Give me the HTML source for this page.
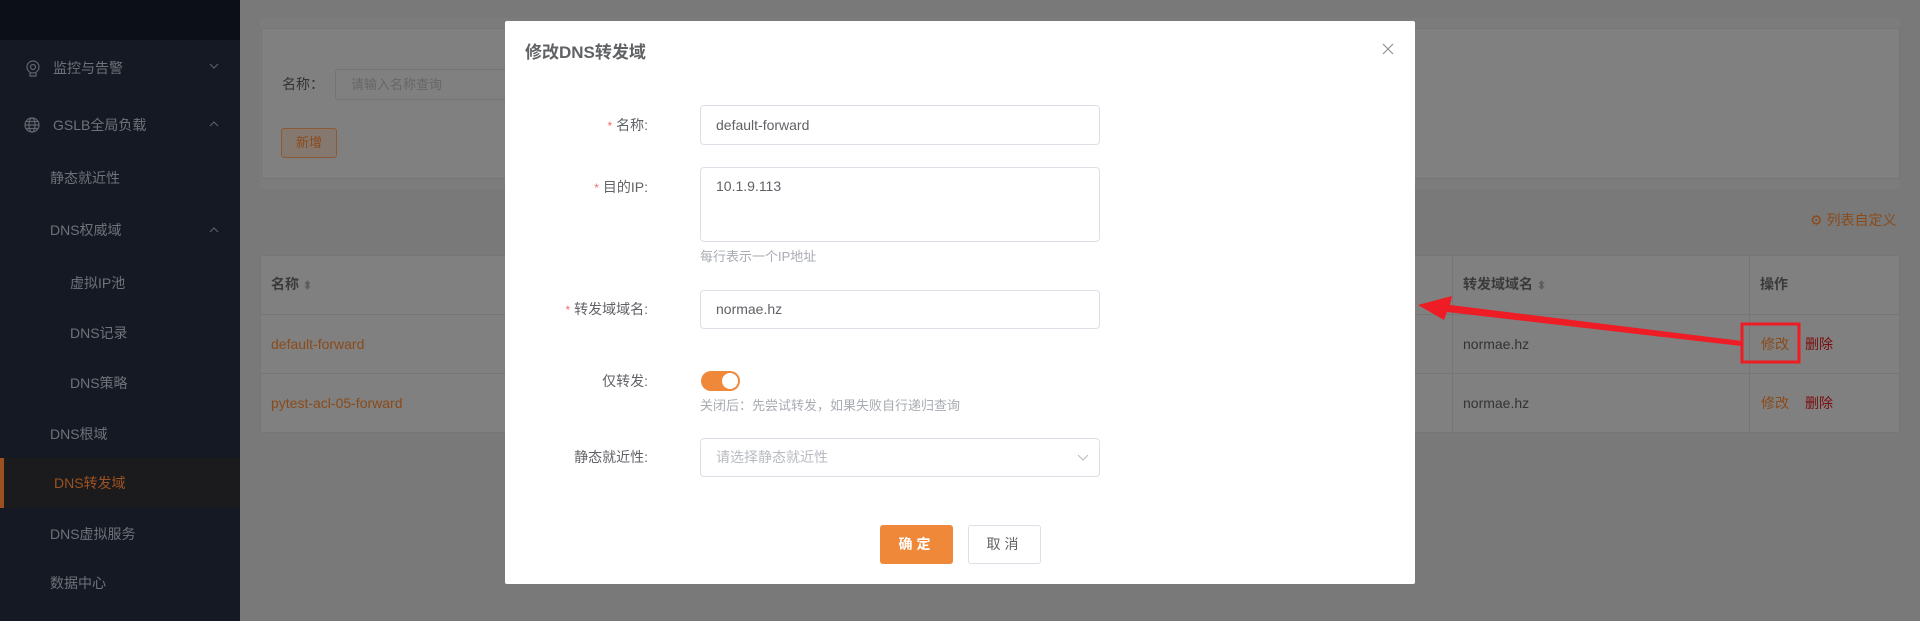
<!DOCTYPE html>
<html><head><meta charset="utf-8"><style>
*{box-sizing:border-box;margin:0;padding:0}
body{width:1920px;height:621px;overflow:hidden;background:#797979;font-family:"Liberation Sans","Noto Sans CJK SC",sans-serif;font-size:14px;position:relative}
.a{position:absolute;line-height:20px;white-space:nowrap}
.si{position:absolute;color:#6f7279;line-height:20px;white-space:nowrap}
.bx{position:absolute}
.lbl{position:absolute;right:767px;color:#606266;line-height:20px;white-space:nowrap}
.lbl i{color:#f56c6c;font-style:normal;margin-right:4px;font-size:12px}
.inp{position:absolute;left:195px;width:400px;border:1px solid #dcdfe6;border-radius:4px;padding:0 15px;color:#606266}
.hint{position:absolute;left:195px;color:#a8abb2;font-size:13px;line-height:20px;white-space:nowrap}
</style></head><body>
<div class="bx" style="left:0;top:0;width:240px;height:621px;background:#141923"></div>
<div class="bx" style="left:0;top:0;width:240px;height:40px;background:#0c0f17"></div>
<svg class="bx" style="left:25px;top:60px" width="16" height="18" viewBox="0 0 16 18" fill="none" stroke="#62656b" stroke-width="1.2"><circle cx="8" cy="7" r="6"/><circle cx="8" cy="7" r="2.5"/><path d="M5 13v3h6v-3"/></svg>
<div class="si" style="left:53px;top:58px">监控与告警</div>
<svg class="bx" style="left:209px;top:63px" width="10" height="6" viewBox="0 0 10 6" fill="none" stroke="#62656b"><path d="M1 1l4 4 4-4"/></svg>
<svg class="bx" style="left:24px;top:117px" width="16" height="16" viewBox="0 0 16 16" fill="none" stroke="#62656b" stroke-width="1.2"><circle cx="8" cy="8" r="7"/><ellipse cx="8" cy="8" rx="3" ry="7"/><path d="M1 8h14M2 4.5h12M2 11.5h12"/></svg>
<div class="si" style="left:53px;top:115px">GSLB全局负载</div>
<svg class="bx" style="left:209px;top:121px" width="10" height="6" viewBox="0 0 10 6" fill="none" stroke="#62656b"><path d="M1 5l4-4 4 4"/></svg>
<div class="si" style="left:50px;top:168px">静态就近性</div>
<div class="si" style="left:50px;top:220px">DNS权威域</div>
<svg class="bx" style="left:209px;top:227px" width="10" height="6" viewBox="0 0 10 6" fill="none" stroke="#62656b"><path d="M1 5l4-4 4 4"/></svg>
<div class="si" style="left:70px;top:273px">虚拟IP池</div>
<div class="si" style="left:70px;top:323px">DNS记录</div>
<div class="si" style="left:70px;top:373px">DNS策略</div>
<div class="si" style="left:50px;top:424px">DNS根域</div>
<div class="bx" style="left:0;top:458px;width:240px;height:50px;background:#1b1b1e"></div>
<div class="bx" style="left:0;top:458px;width:4px;height:50px;background:#9a5020"></div>
<div class="si" style="left:54px;top:473px;color:#9c5220">DNS转发域</div>
<div class="si" style="left:50px;top:524px">DNS虚拟服务</div>
<div class="si" style="left:50px;top:573px">数据中心</div>

<div class="bx" style="left:260px;top:18px;width:1640px;height:171px;background:#7c7c7c"></div>
<div class="bx" style="left:261px;top:28px;width:1639px;height:151px;background:#808080;border:1px solid #767676"></div>
<div class="a" style="left:282px;top:74px;color:#333">名称：</div>
<div class="bx" style="left:335px;top:69px;width:200px;height:31px;border:1px solid #747474;border-radius:3px;color:#666;font-size:13px;padding:0 15px;line-height:29px">请输入名称查询</div>
<div class="bx" style="left:281px;top:128px;width:56px;height:30px;border:1px solid #8a5a38;border-radius:3px;background:#84786f;color:#8c4a1a;font-size:13px;text-align:center;line-height:28px">新增</div>
<div class="a" style="left:1810px;top:210px;color:#8a4a1a">⚙ 列表自定义</div>

<div class="bx" style="left:260px;top:255px;width:1640px;height:178px;background:#808080;border:1px solid #767676"></div>
<div class="bx" style="left:260px;top:314px;width:1640px;height:1px;background:#767676"></div>
<div class="bx" style="left:260px;top:373px;width:1640px;height:1px;background:#767676"></div>
<div class="bx" style="left:1452px;top:255px;width:1px;height:178px;background:#767676"></div>
<div class="bx" style="left:1749px;top:255px;width:1px;height:178px;background:#767676"></div>
<div class="a" style="left:271px;top:274px;color:#3a3a3a;font-weight:bold">名称 <span style="color:#5e5e5e;font-size:11px">⬍</span></div>
<div class="a" style="left:271px;top:334px;color:#8a4a1a">default-forward</div>
<div class="a" style="left:271px;top:393px;color:#8a4a1a">pytest-acl-05-forward</div>
<div class="a" style="left:1463px;top:274px;color:#3a3a3a;font-weight:bold">转发域域名 <span style="color:#5e5e5e;font-size:11px">⬍</span></div>
<div class="a" style="left:1463px;top:334px;color:#333">normae.hz</div>
<div class="a" style="left:1463px;top:393px;color:#333">normae.hz</div>
<div class="a" style="left:1760px;top:274px;color:#3a3a3a;font-weight:bold">操作</div>
<div class="a" style="left:1761px;top:334px;color:#8a4a1a">修改</div>
<div class="a" style="left:1805px;top:334px;color:#7a0d0d">删除</div>
<div class="a" style="left:1761px;top:393px;color:#8a4a1a">修改</div>
<div class="a" style="left:1805px;top:393px;color:#7a0d0d">删除</div>

<div class="bx" style="left:505px;top:21px;width:910px;height:563px;background:#fff;border-radius:2px">
  <div class="a" style="left:20px;top:20px;font-size:17px;font-weight:bold;color:#606266;line-height:24px">修改DNS转发域</div>
  <svg class="bx" style="left:877px;top:22px" width="12" height="12" viewBox="0 0 12 12" stroke="#909399" stroke-width="1.2"><path d="M1 1l10 10M11 1L1 11"/></svg>
  <div class="lbl" style="top:94px"><i>*</i>名称:</div>
  <div class="inp" style="top:84px;height:40px;line-height:38px">default-forward</div>
  <div class="lbl" style="top:156px"><i>*</i>目的IP:</div>
  <div class="inp" style="top:146px;height:75px;padding-top:8px;line-height:20px">10.1.9.113</div>
  <div class="hint" style="top:226px">每行表示一个IP地址</div>
  <div class="lbl" style="top:278px"><i>*</i>转发域域名:</div>
  <div class="inp" style="top:269px;height:39px;line-height:37px">normae.hz</div>
  <div class="lbl" style="top:350px">仅转发:</div>
  <div class="bx" style="left:196px;top:350px;width:39px;height:20px;border-radius:10px;background:#f0883a"><div class="bx" style="left:21px;top:2px;width:16px;height:16px;border-radius:8px;background:#fff"></div></div>
  <div class="hint" style="top:375px">关闭后：先尝试转发，如果失败自行递归查询</div>
  <div class="lbl" style="top:426px">静态就近性:</div>
  <div class="inp" style="top:417px;height:39px;line-height:37px;color:#b8bbc2">请选择静态就近性</div>
  <svg class="bx" style="left:572px;top:433px" width="12" height="7" viewBox="0 0 12 7" fill="none" stroke="#b8bbc2"><path d="M1 1l5 5 5-5"/></svg>
  <div class="bx" style="left:375px;top:504px;width:73px;height:39px;background:#f0883a;border-radius:3px;color:#fff;text-align:center;line-height:39px;font-weight:bold;letter-spacing:4px">确定</div>
  <div class="bx" style="left:463px;top:504px;width:73px;height:39px;border:1px solid #dcdfe6;border-radius:3px;color:#606266;text-align:center;line-height:37px;letter-spacing:4px">取消</div>
</div>

<svg class="bx" style="left:0;top:0" width="1920" height="621">
  <rect x="1742" y="324" width="57" height="38" fill="none" stroke="#ee1c24" stroke-width="3"/>
  <polygon points="1742,341 1450,305 1452,296 1418,305 1444,320 1447,312 1741,346" fill="#ee1c24"/>
</svg>
</body></html>
